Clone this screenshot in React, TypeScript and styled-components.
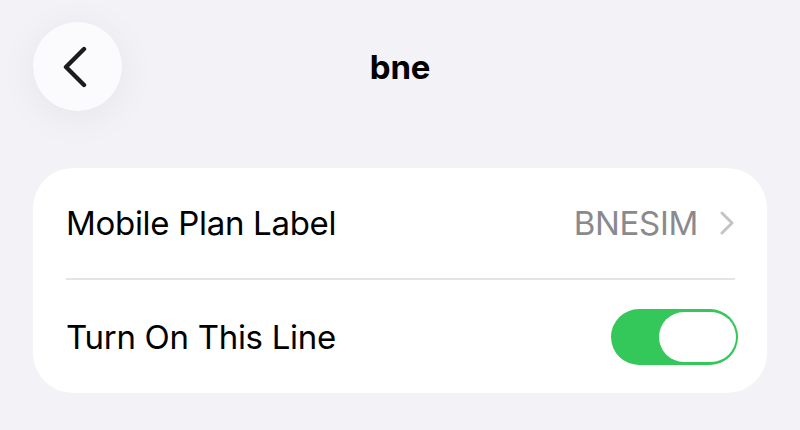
import styled, { createGlobalStyle } from "styled-components";

const GlobalStyle = createGlobalStyle`
  body {
    margin: 0;
    background: #f2f2f7;
    font-family: Inter, "Liberation Sans", sans-serif;
    -webkit-font-smoothing: antialiased;
  }
`;

const Page = styled.div`
  width: 800px;
  height: 430px;
  background: #f2f2f7;
  overflow: hidden;
`;

const Header = styled.header`
  display: grid;
  grid-template-columns: 1fr auto 1fr;
  align-items: center;
  padding: 22px 33px 0;
  height: 89px;
`;

const BackButton = styled.button`
  width: 89px;
  height: 89px;
  border-radius: 50%;
  border: none;
  padding: 0;
  background: #fbfbfd;
  box-shadow: 0 6px 40px rgba(0, 0, 0, 0.06);
  display: flex;
  align-items: center;
  justify-content: center;
  justify-self: start;
`;

const Title = styled.h1`
  margin: 0;
  font-size: 33px;
  font-weight: 700;
  color: #000;
  letter-spacing: -0.2px;
`;

const Card = styled.section`
  margin: 57px 33px 0;
  background: #fff;
  border-radius: 40px;
  padding: 0 29px 0 33px;
`;

const Row = styled.div<{ $divider?: boolean }>`
  display: flex;
  align-items: center;
  justify-content: space-between;
  height: ${({ $divider }) => ($divider ? "110px" : "113px")};
  border-bottom: ${({ $divider }) => ($divider ? "2px solid #e3e3e8" : "none")};
  margin-right: ${({ $divider }) => ($divider ? "3px" : "0")};
`;

const Label = styled.span`
  font-size: 33px;
  color: #000;
  letter-spacing: -0.3px;
`;

const Trailing = styled.div`
  display: flex;
  align-items: center;
  gap: 21px;
`;

const Value = styled.span`
  font-size: 33px;
  color: #8a8a8e;
  letter-spacing: -0.3px;
`;

const Switch = styled.div<{ $on: boolean }>`
  width: 127px;
  height: 56px;
  border-radius: 28px;
  background: ${({ $on }) => ($on ? "#34c759" : "#e9e9eb")};
  display: flex;
  align-items: center;
  justify-content: ${({ $on }) => ($on ? "flex-end" : "flex-start")};
  padding: 0 2px;
  box-sizing: border-box;
`;

const Knob = styled.div`
  width: 77px;
  height: 50px;
  border-radius: 25px;
  background: #fff;
`;

export default function App() {
  return (
    <Page>
      <GlobalStyle />
      <Header>
        <BackButton aria-label="Back">
          <svg width="30" height="44" viewBox="0 0 30 44" fill="none">
            <path
              d="M21 4 L3 22 L21 40"
              stroke="#1c1c1e"
              strokeWidth="4.4"
              strokeLinecap="round"
              strokeLinejoin="round"
            />
          </svg>
        </BackButton>
        <Title>bne</Title>
        <div />
      </Header>
      <Card>
        <Row $divider>
          <Label>Mobile Plan Label</Label>
          <Trailing>
            <Value>BNESIM</Value>
            <svg width="16" height="24" viewBox="0 0 16 24" fill="none">
              <path
                d="M3 2 L13 12 L3 22"
                stroke="#c4c4c7"
                strokeWidth="3"
                strokeLinecap="round"
                strokeLinejoin="round"
              />
            </svg>
          </Trailing>
        </Row>
        <Row>
          <Label>Turn On This Line</Label>
          <Switch $on>
            <Knob />
          </Switch>
        </Row>
      </Card>
    </Page>
  );
}
